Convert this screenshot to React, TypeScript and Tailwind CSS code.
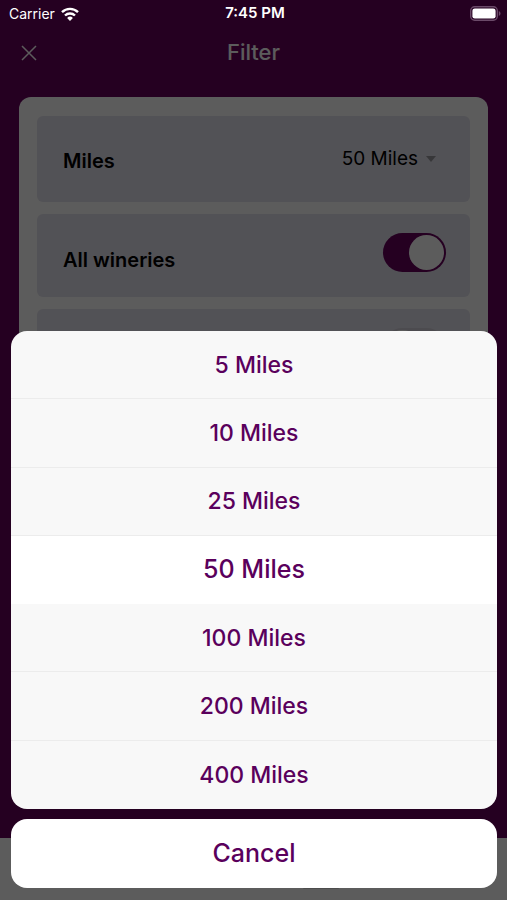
import { useState } from "react";

const distances = [5, 10, 25, 50, 100, 200, 400];

export default function App() {
  const [miles, setMiles] = useState(50);
  const [open, setOpen] = useState(true);

  function choose(value: number) {
    setMiles(value);
    setOpen(false);
  }

  return (
    <div className="relative flex h-screen flex-col overflow-hidden bg-[#66005c] font-['Inter','Liberation_Sans',sans-serif]">
      <StatusBar />

      <header className="grid h-[50px] shrink-0 grid-cols-[1fr_auto_1fr] items-center px-5 pt-px">
        <button type="button" aria-label="Close" className="w-fit text-white">
          <svg viewBox="0 0 18 18" className="size-[18px]" fill="none" stroke="currentColor" strokeWidth="1.5">
            <path d="M2 2l14 14M16 2L2 16" />
          </svg>
        </button>
        <h1 className="text-[22px] font-medium text-white">Filter</h1>
      </header>

      <main className="min-h-0 flex-1 overflow-hidden px-[19px] pt-5">
        <section className="flex flex-col gap-3 rounded-xl bg-white px-[18px] py-[19px]">
          <div className="flex h-[86px] items-center justify-between rounded-md bg-[#e4e2ee] pr-[34px] pl-[26px]">
            <span id="miles-label" className="pt-1 text-xl font-semibold">
              Miles
            </span>
            <button
              type="button"
              aria-haspopup="listbox"
              aria-labelledby="miles-label miles-value"
              onClick={() => setOpen(true)}
              className="flex items-center gap-2"
            >
              <span id="miles-value" className="text-[19px]">
                {miles} Miles
              </span>
              <svg viewBox="0 0 10 6" className="h-[6px] w-[10px] fill-[#9a9a9f]">
                <path d="M0 0h10L5 6z" />
              </svg>
            </button>
          </div>
          <ToggleRow id="all-wineries" label="All wineries" defaultChecked />
          <ToggleRow id="favorites" label="Favorites" />
        </section>
      </main>

      <nav aria-label="Tabs" className="flex h-[62px] shrink-0 items-end justify-center bg-white pb-[11px] pl-[134px]">
        <span className="h-[2px] w-9 rounded-full bg-[#d4d4d4]" />
      </nav>

      {open ? (
        <div className="absolute inset-0 flex flex-col justify-end gap-[10px] bg-black/64 pr-[10px] pb-3 pl-[11px]">
          <div
            role="listbox"
            aria-label="Miles"
            className="grid h-[478px] shrink-0 auto-rows-fr overflow-hidden rounded-2xl bg-[#f8f8f8]"
          >
            {distances.map((value) => (
              <Option key={value} value={value} selected={value === miles} onSelect={choose} />
            ))}
          </div>
          <button
            type="button"
            onClick={() => setOpen(false)}
            className="h-[69px] shrink-0 rounded-2xl bg-white text-[25px] font-medium text-[#5a005c]"
          >
            Cancel
          </button>
        </div>
      ) : null}
    </div>
  );
}

function StatusBar() {
  return (
    <div className="relative z-10 grid h-[27px] shrink-0 grid-cols-[1fr_auto_1fr] items-center pr-[6px] pl-[9px] text-white">
      <div className="flex items-center gap-[6px]">
        <span className="text-sm">Carrier</span>
        <svg viewBox="0 0 18 14" className="h-[14px] w-[18px]" fill="none" stroke="currentColor" strokeWidth="2.4">
          <path d="M1 5.200a11.400 11.400 0 0 1 16 0" />
          <path d="M4 8.500a7.200 7.200 0 0 1 10 0" />
          <path d="M9 14l-2.900-3a4.200 4.200 0 0 1 5.800 0z" fill="currentColor" stroke="none" />
        </svg>
      </div>
      <span className="text-[15px] font-semibold">7:45 PM</span>
      <svg viewBox="0 0 31 15" className="h-[15px] w-[31px] justify-self-end" fill="none">
        <rect x="0.7" y="0.7" width="26.6" height="13.6" rx="4" stroke="#6b4a69" strokeWidth="1.4" />
        <rect x="2.4" y="2.4" width="23.2" height="10.2" rx="2.4" fill="#fff" />
        <path d="M28.800 5v5c1-.4 1.700-1.400 1.700-2.500S29.800 5.400 28.800 5z" fill="#6b4a69" />
      </svg>
    </div>
  );
}

function ToggleRow({
  id,
  label,
  defaultChecked,
}: {
  id: string;
  label: string;
  defaultChecked?: boolean;
}) {
  return (
    <div className="flex h-[83px] items-start justify-between rounded-md bg-[#e4e2ee] pt-[19px] pr-6 pl-[26px]">
      <label htmlFor={id} className="pt-[13px] text-xl font-semibold">
        {label}
      </label>
      <input
        id={id}
        type="checkbox"
        role="switch"
        defaultChecked={defaultChecked}
        className="flex h-[39px] w-[63px] appearance-none items-center rounded-full bg-[#d2d0da] p-[2px] before:size-[35px] before:rounded-full before:bg-white checked:justify-end checked:bg-[#66005c]"
      />
    </div>
  );
}

function Option({
  value,
  selected,
  onSelect,
}: {
  value: number;
  selected: boolean;
  onSelect: (value: number) => void;
}) {
  return (
    <button
      type="button"
      role="option"
      aria-selected={selected}
      onClick={() => onSelect(value)}
      className="border-b border-[#ececec] pt-px text-[23px] font-medium text-[#5a005c] last:border-transparent aria-selected:border-white aria-selected:bg-white aria-selected:text-[25px]"
    >
      {value} Miles
    </button>
  );
}
